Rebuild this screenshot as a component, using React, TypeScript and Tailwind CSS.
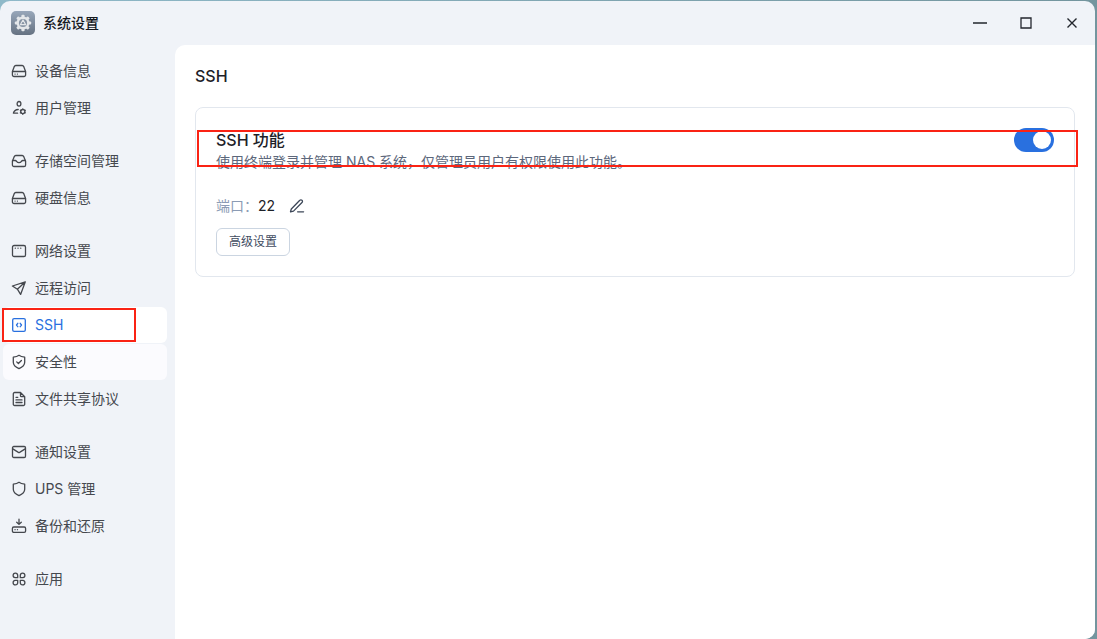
import { useState, type ReactNode } from "react";

function Icon({ children }: { children: ReactNode }) {
  return (
    <svg
      viewBox="0 0 16 16"
      className="size-4 shrink-0"
      fill="none"
      stroke="currentColor"
      strokeWidth="1.3"
      strokeLinecap="round"
      strokeLinejoin="round"
      aria-hidden="true"
    >
      {children}
    </svg>
  );
}

const DriveIcon = () => (
  <Icon>
    <path d="M1.4 8.6 3.3 3.6A1.6 1.6 0 0 1 4.8 2.5h6.4a1.6 1.6 0 0 1 1.5 1.1l1.9 5v3.3a1.6 1.6 0 0 1-1.6 1.6H3a1.6 1.6 0 0 1-1.6-1.6zM1.6 8.5h12.8" />
    <path d="M4 11.1h.1M6.4 11.1h.1" />
  </Icon>
);

const UserIcon = () => (
  <Icon>
    <ellipse cx="8" cy="3.8" rx="1.9" ry="2.3" />
    <path d="M7.2 9.5C5 9.6 3 10.8 2.400 13.200h4.200" />
    <circle cx="11.800" cy="11.600" r="2.100" />
    <path d="M11.800 8.900v.6M11.800 13.700v.6M9.400 10.300l.6.3M13.600 12.600l.6.3M9.400 12.900l.6-.3M13.600 10.600l.6-.3" />
  </Icon>
);

const InboxIcon = () => (
  <Icon>
    <path d="M1.4 8.200 3.300 3.600A1.600 1.600 0 0 1 4.800 2.500h6.400a1.600 1.600 0 0 1 1.500 1.100l1.900 4.600v3.700a1.600 1.600 0 0 1-1.600 1.600H3a1.600 1.600 0 0 1-1.600-1.600z" />
    <path d="M1.500 7.500h2.700c.9 0 1.200.6 1.600 1.200.4.600.9.900 2.200.9s1.800-.3 2.200-.9c.4-.6.700-1.200 1.600-1.200h2.700" />
  </Icon>
);

const NetworkIcon = () => (
  <Icon>
    <rect x="1.500" y="2.500" width="13" height="11" rx="1.600" />
    <path d="M4.300 5.200h.1M7 5.200h.1M9.700 5.200h.1" />
  </Icon>
);

const SendIcon = () => (
  <Icon>
    <path d="M14.300 1.800 1.400 6l5 3.200 3.200 5.200zM6.400 9.200l7.700-7.200" />
  </Icon>
);

const CodeIcon = () => (
  <Icon>
    <rect x="1.700" y="1.700" width="12.600" height="12.600" rx="1.400" />
    <path d="M6.800 6.300 5.500 8l1.300 1.700M9.200 6.300 10.500 8 9.200 9.700" />
  </Icon>
);

const shieldPath =
  "M8 1.300c1.500 1.200 3.400 1.700 5.700 1.900v5c0 3-2.500 5-5.700 6.500C4.800 13.200 2.300 11.200 2.300 8.200v-5C4.600 3 6.500 2.500 8 1.300z";

const SecurityIcon = () => (
  <Icon>
    <path d={shieldPath} />
    <path d="m5.700 7.900 1.700 1.600 3-3" />
  </Icon>
);

const ShieldIcon = () => (
  <Icon>
    <path d={shieldPath} />
  </Icon>
);

const FileIcon = () => (
  <Icon>
    <path d="M9.500 1.500H3.600a1.300 1.300 0 0 0-1.300 1.300v10.400a1.300 1.300 0 0 0 1.300 1.300h8.800a1.300 1.300 0 0 0 1.300-1.300V5.700zM9.500 1.500v3.200a1 1 0 0 0 1 1h3.200M5 6.300h1.800M5 8.900h6M5 11.500h6" />
  </Icon>
);

const MailIcon = () => (
  <Icon>
    <rect x="1.500" y="2.500" width="13" height="11" rx="1.300" />
    <path d="m1.800 4.900 5.600 3.500a1.200 1.200 0 0 0 1.200 0l5.600-3.500" />
  </Icon>
);

const BackupIcon = () => (
  <Icon>
    <path d="M8 1.200v5M5.700 4.200 8 6.400l2.300-2.200" />
    <rect x="1.400" y="9" width="13.200" height="5.400" rx="1.400" />
    <path d="M4 11.700h.1M6.400 11.700h.1" />
  </Icon>
);

const AppsIcon = () => (
  <Icon>
    <path d="M6.700 6.700H4.200a2.300 2.300 0 1 1 2.500-2.500zM9.300 6.700V4.200a2.300 2.300 0 1 1 2.500 2.500zM6.700 9.300v2.500a2.300 2.300 0 1 1-2.500-2.500zM9.300 9.300h2.500a2.300 2.300 0 1 1-2.500 2.500z" />
  </Icon>
);

const groups = [
  [
    { label: "设备信息", icon: DriveIcon },
    { label: "用户管理", icon: UserIcon },
  ],
  [
    { label: "存储空间管理", icon: InboxIcon },
    { label: "硬盘信息", icon: DriveIcon },
  ],
  [
    { label: "网络设置", icon: NetworkIcon },
    { label: "远程访问", icon: SendIcon },
    { label: "SSH", icon: CodeIcon },
    { label: "安全性", icon: SecurityIcon },
    { label: "文件共享协议", icon: FileIcon },
  ],
  [
    { label: "通知设置", icon: MailIcon },
    { label: "UPS 管理", icon: ShieldIcon },
    { label: "备份和还原", icon: BackupIcon },
  ],
  [{ label: "应用", icon: AppsIcon }],
];

function itemTone(label: string) {
  if (label === "SSH") return "bg-white text-[#2970df]";
  if (label === "安全性") return "bg-[#fbfbfe] text-[#45484e]";
  return "text-[#45484e] hover:bg-[#fbfbfe]";
}

function AppLogo() {
  return (
    <svg viewBox="0 0 24 24" className="size-6" aria-hidden="true">
      <defs>
        <linearGradient id="logo" x1="0" y1="0" x2="0" y2="1">
          <stop offset="0" stopColor="#98a7ba" />
          <stop offset="1" stopColor="#667282" />
        </linearGradient>
      </defs>
      <rect width="24" height="24" rx="5" fill="url(#logo)" />
      <g fill="#e4e7ea">
        {[0, 45, 90, 135].map((angle) => (
          <rect key={angle} x="10.400" y="3.800" width="3.200" height="16.400" rx="1" transform={`rotate(${angle} 12 12)`} />
        ))}
        <circle cx="12" cy="12" r="6.500" />
      </g>
      <circle cx="12" cy="12" r="4.100" fill="#8794a4" />
      <path d="m12 9 2.700 4.700H9.300z" fill="none" stroke="#e4e7ea" strokeWidth="1.200" strokeLinejoin="round" />
    </svg>
  );
}

function Sidebar() {
  return (
    <nav aria-label="系统设置" className="flex w-[175px] shrink-0 flex-col gap-[17px] pt-2 pr-2 pl-[3px]">
      {groups.map((group) => (
        <ul key={group[0].label} className="flex flex-col gap-px">
          {group.map(({ label, icon: ItemIcon }) => (
            <li key={label} className="relative">
              <a
                href="#"
                aria-current={label === "SSH" ? "page" : undefined}
                className={`flex h-9 items-center gap-2 rounded-md pl-2 text-sm ${itemTone(label)}`}
              >
                <ItemIcon />
                {label}
              </a>
              {label === "SSH" && (
                <div className="pointer-events-none absolute top-px -left-px h-[34px] w-[134px] border-2 border-[#fa2314]" />
              )}
            </li>
          ))}
        </ul>
      ))}
    </nav>
  );
}

function TitleBar() {
  return (
    <header className="flex h-11 items-center justify-between px-[11px]">
      <div className="flex items-center gap-2">
        <AppLogo />
        <h1 className="text-sm font-medium text-[#16191f]">系统设置</h1>
      </div>
      <div className="flex gap-[22px] text-[#22262d]">
        <button type="button" aria-label="最小化" className="flex size-6 items-center justify-center">
          <svg viewBox="0 0 14 14" className="size-3.5" stroke="currentColor" strokeWidth="1.300">
            <path d="M0 7h14" />
          </svg>
        </button>
        <button type="button" aria-label="最大化" className="flex size-6 items-center justify-center">
          <svg viewBox="0 0 14 14" className="size-3.5" fill="none" stroke="currentColor" strokeWidth="1.300">
            <path d="M2 2h10v10H2z" />
          </svg>
        </button>
        <button type="button" aria-label="关闭" className="flex size-6 items-center justify-center">
          <svg viewBox="0 0 14 14" className="size-3.5" stroke="currentColor" strokeWidth="1.400">
            <path d="m2.500 2.500 9 9M11.500 2.500l-9 9" />
          </svg>
        </button>
      </div>
    </header>
  );
}

function SshCard() {
  const [enabled, setEnabled] = useState(true);
  return (
    <section className="rounded-lg border border-[#e2e7ee] p-5">
      <div className="relative flex items-start justify-between">
        <div>
          <h3 className="text-base font-medium text-[#1d2128]">
            <label htmlFor="ssh-enabled">SSH 功能</label>
          </h3>
          <p className="text-sm text-[#5c677b]">使用终端登录并管理 NAS 系统，仅管理员用户有权限使用此功能。</p>
        </div>
        <input
          id="ssh-enabled"
          type="checkbox"
          role="switch"
          checked={enabled}
          onChange={(event) => setEnabled(event.target.checked)}
          className="h-6 w-10 shrink-0 cursor-pointer appearance-none rounded-full bg-slate-300 p-[3px] before:block before:size-[18px] before:rounded-full before:bg-white checked:bg-[#2970df] checked:before:translate-x-4"
        />
        <div className="pointer-events-none absolute top-0.5 -right-6 -left-[19px] h-[37px] border-2 border-[#fa2314]" />
      </div>
      <div className="mt-6 flex h-5 items-center text-sm">
        <span className="text-[#8b9bb4]">端口：</span>
        <span className="text-[#1d2128]">22</span>
        <button type="button" aria-label="编辑端口" className="ml-[14px] text-[#3d4758]">
          <Icon>
            <path d="m2.300 11 8.500-8.700a1.500 1.500 0 0 1 2.200 0 1.500 1.500 0 0 1 0 2.200l-8.500 8.600-3 .7zM8.600 13.800h6" />
          </Icon>
        </button>
      </div>
      <button
        type="button"
        className="mt-3 h-7 rounded-md border border-[#cbd5e1] px-3 text-xs text-[#414c5f]"
      >
        高级设置
      </button>
    </section>
  );
}

export default function App() {
  return (
    <div className="flex min-h-screen flex-col bg-linear-to-r from-[#8fb9c9] to-[#73959e] pt-px pr-0.5 font-['Inter','Noto_Sans_CJK_SC',sans-serif]">
      <div className="flex grow flex-col overflow-hidden rounded-t-[10px] rounded-br-[10px] bg-[#f0f3f8]">
        <TitleBar />
        <div className="flex grow">
          <Sidebar />
          <main className="min-w-0 grow rounded-tl-[10px] bg-white px-5 pt-[19px]">
            <h2 className="mb-[19px] text-base font-medium text-[#1d2128]">SSH</h2>
            <SshCard />
          </main>
        </div>
      </div>
    </div>
  );
}
